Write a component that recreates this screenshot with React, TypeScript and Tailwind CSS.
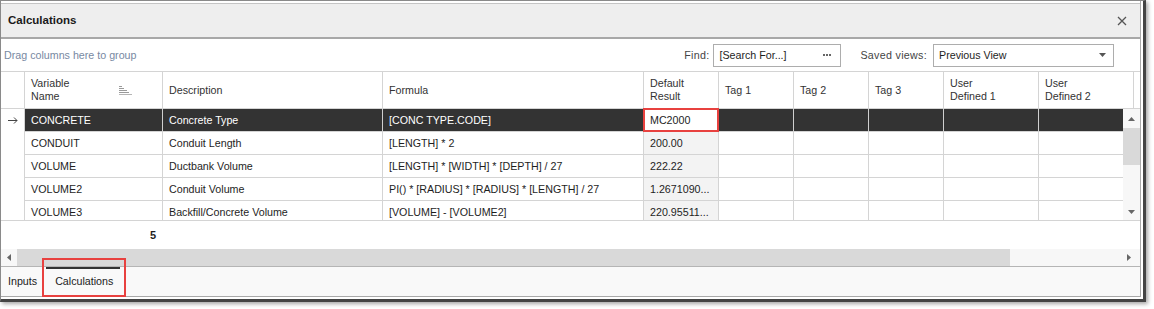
import React from 'react';

interface Col {
  key: string;
  label: React.ReactNode;
  w: string;
}

const COLS: Col[] = [
  { key: 'name', label: <>Variable<br />Name</>, w: 'w-[138px]' },
  { key: 'desc', label: 'Description', w: 'w-[220px]' },
  { key: 'formula', label: 'Formula', w: 'w-[261px]' },
  { key: 'result', label: <>Default<br />Result</>, w: 'w-[75px]' },
  { key: 'tag1', label: 'Tag 1', w: 'w-[75px]' },
  { key: 'tag2', label: 'Tag 2', w: 'w-[75px]' },
  { key: 'tag3', label: 'Tag 3', w: 'w-[75px]' },
  { key: 'ud1', label: <>User<br />Defined 1</>, w: 'w-[95px]' },
  { key: 'ud2', label: <>User<br />Defined 2</>, w: 'w-[95px]' },
];

const ROWS = [
  { name: 'CONCRETE', desc: 'Concrete Type', formula: '[CONC TYPE.CODE]', result: 'MC2000' },
  { name: 'CONDUIT', desc: 'Conduit Length', formula: '[LENGTH] * 2', result: '200.00' },
  { name: 'VOLUME', desc: 'Ductbank Volume', formula: '[LENGTH] * [WIDTH] * [DEPTH] / 27', result: '222.22' },
  { name: 'VOLUME2', desc: 'Conduit Volume', formula: 'PI() * [RADIUS] * [RADIUS] * [LENGTH] / 27', result: '1.2671090...' },
  { name: 'VOLUME3', desc: 'Backfill/Concrete Volume', formula: '[VOLUME] - [VOLUME2]', result: '220.95511...' },
];

function Tri({ dir, className = '' }: { dir: 'up' | 'down' | 'left' | 'right'; className?: string }) {
  const pts = {
    up: '0,5 4,0 8,5',
    down: '0,0 8,0 4,5',
    left: '5,0 5,8 0,4',
    right: '0,0 0,8 5,4',
  }[dir];
  const vb = dir === 'up' || dir === 'down' ? '0 0 8 5' : '0 0 5 8';
  const size = dir === 'up' || dir === 'down' ? 'w-[7px] h-[4px]' : 'w-[4px] h-[7px]';
  return (
    <svg viewBox={vb} className={`${size} ${className}`} preserveAspectRatio="none">
      <polygon points={pts} fill="currentColor" />
    </svg>
  );
}

function SortIcon() {
  return (
    <svg width="13" height="9" viewBox="0 0 13 9" className="shrink-0">
      <rect x="0" y="0" width="3" height="1" fill="#9a9a9a" />
      <rect x="0" y="2" width="5" height="1" fill="#9a9a9a" />
      <rect x="0" y="4" width="8" height="1" fill="#9a9a9a" />
      <rect x="0" y="6" width="10" height="1" fill="#9a9a9a" />
      <rect x="0" y="8" width="13" height="1" fill="#b5b5b5" />
    </svg>
  );
}

function RowArrow() {
  return (
    <svg width="10" height="7" viewBox="0 0 10 7">
      <path d="M0 3.5 H9 M6 0.5 L9 3.5 L6 6.5" stroke="#444" strokeWidth="1" fill="none" />
    </svg>
  );
}

function Dots() {
  return (
    <svg width="8" height="2" viewBox="0 0 8 2">
      <rect x="0" y="0" width="2" height="2" fill="#666" />
      <rect x="3" y="0" width="2" height="2" fill="#666" />
      <rect x="6" y="0" width="2" height="2" fill="#666" />
    </svg>
  );
}

export default function App() {
  return (
    <div className="w-[1154px] h-[309px] bg-white font-['Liberation_Sans',Arial,sans-serif] text-[10.7px] text-[#1e1e1e]">
      <div className="relative w-[1146px] border-l border-t border-[#8a8a8a] border-r-[3px] border-b-[3px] border-r-[#444] border-b-[#444] pr-[2px] pb-[2px] bg-white shadow-[2px_2px_4px_rgba(0,0,0,0.35)]">
        <div className="w-[1140px] flex flex-col border-r border-b border-[#a9a9a9]">
          {/* top strip */}
          <div className="h-[3px] border-b border-[#c4c4c4] bg-white" />

          {/* title bar */}
          <div className="h-[35px] bg-[#eeeeee] border-b-2 border-[#a8a8a8] flex items-center justify-between pl-[7px] pr-[13px]">
            <span className="font-bold text-[11.5px] text-[#1a1a1a]">Calculations</span>
            <svg width="10" height="10" viewBox="0 0 10 10">
              <path d="M1 1 L9 9 M9 1 L1 9" stroke="#555" strokeWidth="1.3" />
            </svg>
          </div>

          {/* toolbar */}
          <div className="h-[32px] flex items-center pl-[3px] pr-[26px]">
            <span className="text-[#7889a2]">Drag columns here to group</span>
            <div className="flex-1" />
            <span className="text-[#444] mr-[4px] tracking-[0.3px]">Find:</span>
            <div className="w-[128px] h-[23px] border border-[#adadad] flex items-center pl-[5px] pr-[9px] justify-between">
              <span>[Search For...]</span>
              <Dots />
            </div>
            <span className="text-[#444] ml-[19px] mr-[6px] tracking-[0.3px]">Saved views:</span>
            <div className="w-[181px] h-[23px] border border-[#adadad] flex items-center pl-[5px] pr-[7px] justify-between">
              <span>Previous View</span>
              <Tri dir="down" className="text-[#555]" />
            </div>
          </div>

          {/* header */}
          <div className="h-[37px] border-t border-[#d4d4d4] flex text-[#333]">
            <div className="w-[24px] border-r border-[#d4d4d4]" />
            {COLS.map((c) => (
              <div
                key={c.key}
                className={`${c.w} shrink-0 border-r border-[#d4d4d4] flex items-center pl-[6px] leading-[13px] ${c.key === 'name' ? 'justify-between pr-[30px]' : ''}`}
              >
                <span>{c.label}</span>
                {c.key === 'name' && <SortIcon />}
              </div>
            ))}
            <div className="flex-1" />
          </div>

          {/* data */}
          <div className="h-[112px] flex border-t border-[#d4d4d4]">
            <div className="flex-1 overflow-hidden">
              {ROWS.map((r, i) => {
                const sel = i === 0;
                return (
                  <div key={r.name} className="flex h-[23px]">
                    <div className="w-[24px] shrink-0 border-r border-[#d4d4d4] flex items-center pl-[7px]">
                      {sel && <RowArrow />}
                    </div>
                    {COLS.map((c) => {
                      const val = (r as Record<string, string>)[c.key] ?? '';
                      let bg = 'bg-white';
                      if (sel && c.key !== 'result') bg = 'bg-[#333333] text-white';
                      else if (!sel && c.key === 'result') bg = 'bg-[#f3f3f3]';
                      return (
                        <div
                          key={c.key}
                          className={`${c.w} shrink-0 border-r border-b ${sel ? 'border-[#cfcfcf] border-b-[#d4d4d4]' : 'border-[#d4d4d4]'} ${bg} flex items-center pl-[6px] whitespace-nowrap overflow-hidden`}
                        >
                          {val}
                        </div>
                      );
                    })}
                  </div>
                );
              })}
            </div>
            <div className="w-[17px] shrink-0 bg-[#f7f7f7] flex flex-col items-center">
              <div className="h-[19px] flex items-center justify-center pt-[1px]">
                <Tri dir="up" className="text-[#666]" />
              </div>
              <div className="w-full h-[37px] bg-[#d9d9d9]" />
              <div className="flex-1" />
              <div className="h-[16px] flex items-center justify-center">
                <Tri dir="down" className="text-[#666]" />
              </div>
            </div>
          </div>

          {/* footer summary */}
          <div className="h-[29px] border-t border-[#d4d4d4] flex items-center">
            <div className="w-[162px] text-right pr-[7px] font-bold text-[11px]">5</div>
          </div>

          {/* horizontal scrollbar */}
          <div className="h-[17px] flex items-center bg-[#f7f7f7]">
            <div className="w-[16px] flex justify-center">
              <Tri dir="left" className="text-[#666]" />
            </div>
            <div className="w-[993px] h-full bg-[#d9d9d9]" />
            <div className="flex-1" />
            <div className="w-[22px] flex justify-center">
              <Tri dir="right" className="text-[#666]" />
            </div>
          </div>

          {/* tabs */}
          <div className="h-[30px] border-t border-[#b5b5b5] bg-[#f9f9f9] flex text-[#222]">
            <div className="pl-[7px] pr-[8px] flex items-center">Inputs</div>
            <div className="relative flex items-center pl-[9px] pr-[9px] ml-[1px]">
              <div className="absolute top-0 left-0 right-[2px] h-[2px] bg-[#333]" />
              Calculations
            </div>
          </div>
        </div>

        {/* annotation boxes */}
        <div className="absolute left-[642px] top-[107px] w-[76px] h-[24px] border-2 border-[#e8413f]" />
        <div className="absolute left-[41px] top-[257px] w-[84px] h-[39px] border-2 border-[#e8413f]" />
      </div>
    </div>
  );
}
